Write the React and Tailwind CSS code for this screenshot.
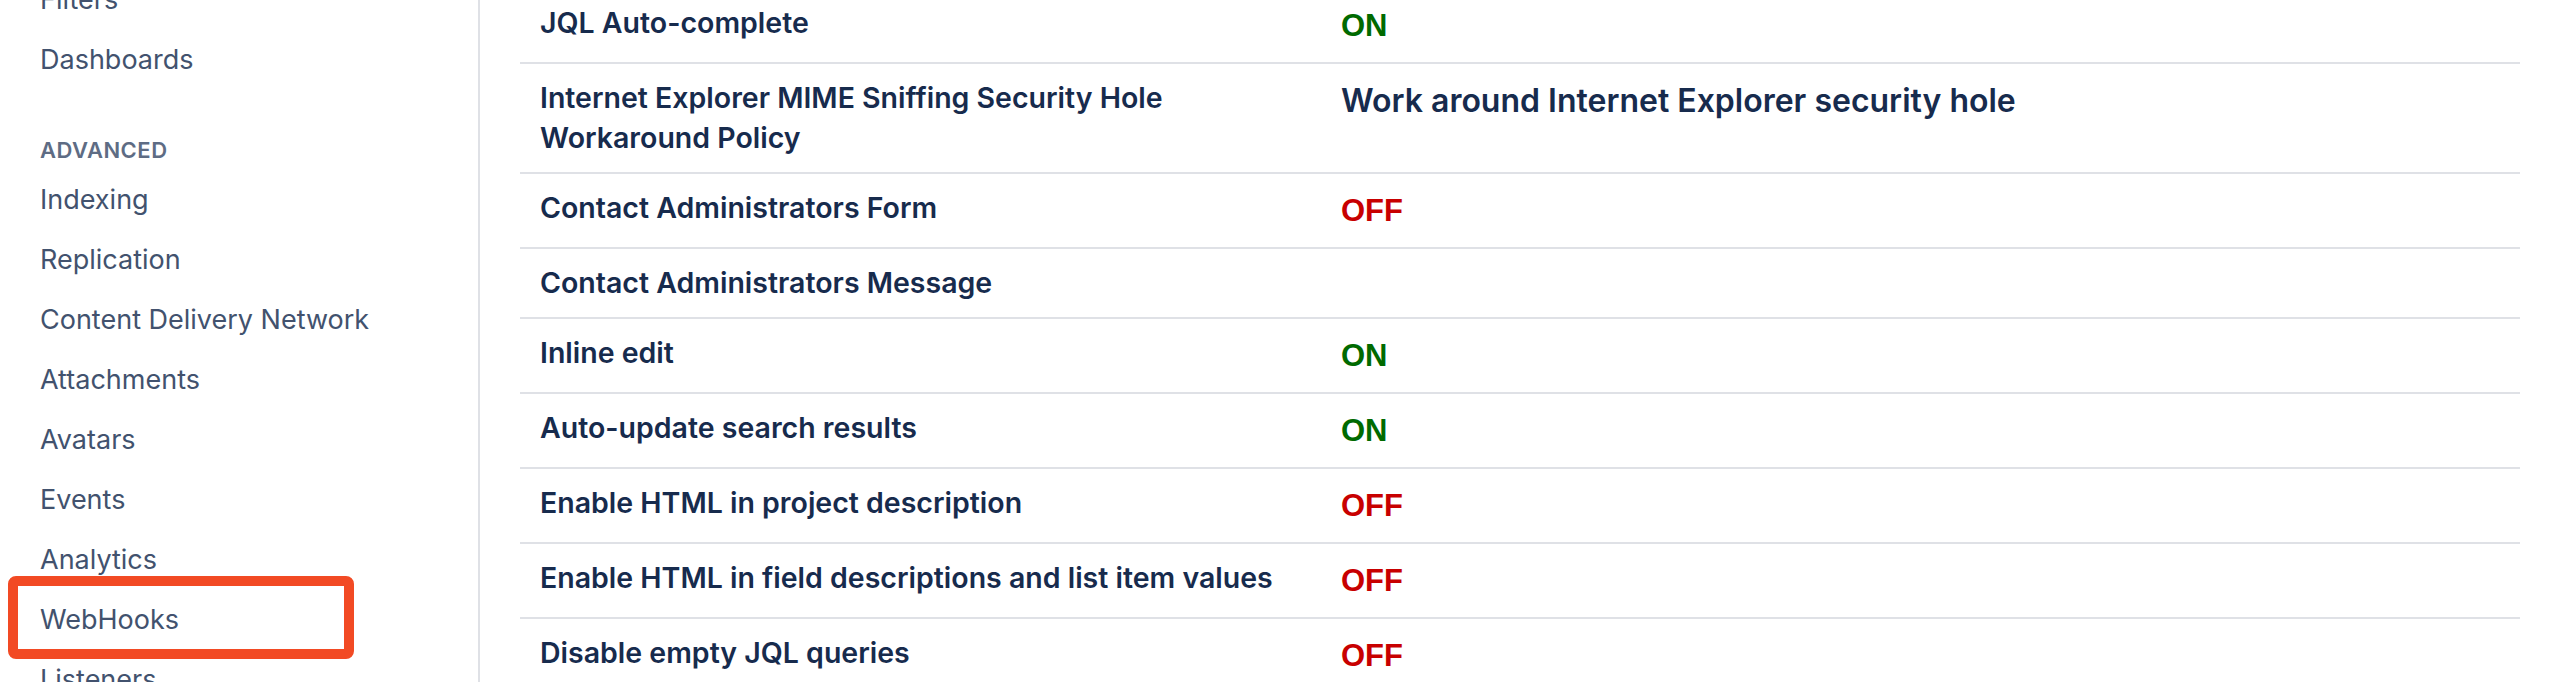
const advanced = [
  "Indexing",
  "Replication",
  "Content Delivery Network",
  "Attachments",
  "Avatars",
  "Events",
  "Analytics",
  "WebHooks",
  "Listeners",
];

const settings = [
  { label: "JQL Auto-complete", value: "ON" },
  {
    label: "Internet Explorer MIME Sniffing Security Hole Workaround Policy",
    value: "Work around Internet Explorer security hole",
  },
  { label: "Contact Administrators Form", value: "OFF" },
  { label: "Contact Administrators Message", value: "" },
  { label: "Inline edit", value: "ON" },
  { label: "Auto-update search results", value: "ON" },
  { label: "Enable HTML in project description", value: "OFF" },
  { label: "Enable HTML in field descriptions and list item values", value: "OFF" },
  { label: "Disable empty JQL queries", value: "OFF" },
];

const SideLink = ({ children, highlight }) => (
  <div className="relative h-[60px] flex items-center pl-[40px] text-[27px] text-[#42526e]">
    {children}
    {highlight && (
      <div className="absolute left-[8px] top-[-14px] w-[346px] h-[83px] border-[10px] border-[#f24a24] rounded-[8px]" />
    )}
  </div>
);

const Value = ({ value }) => {
  if (value === "ON")
    return <div className="h-[45px] leading-[45px] font-['Liberation_Sans',sans-serif] font-bold text-[31px] text-[#006a00]">ON</div>;
  if (value === "OFF")
    return <div className="h-[45px] leading-[45px] font-['Liberation_Sans',sans-serif] font-bold text-[31px] text-[#c80000]">OFF</div>;
  if (!value) return null;
  return <div className="h-[45px] leading-[45px] font-semibold text-[32px] text-[#172b4d]">{value}</div>;
};

export default function App() {
  return (
    <div className="flex h-[682px] overflow-hidden bg-white font-['Inter',sans-serif]">
      <aside className="w-[480px] shrink-0 border-r-2 border-[#dfe1e6]">
        <nav className="-mt-[30px]">
          <SideLink>Filters</SideLink>
          <SideLink>Dashboards</SideLink>
          <div className="pl-[40px] pt-[48px] pb-[8px] leading-[24px] text-[22px] font-semibold tracking-[0.5px] text-[#5e6c84]">
            ADVANCED
          </div>
          {advanced.map((item) => (
            <SideLink key={item} highlight={item === "WebHooks"}>
              {item}
            </SideLink>
          ))}
        </nav>
      </aside>

      <main className="flex-1 px-[40px]">
        <table className="w-full -mt-[11px] border-collapse">
          <tbody>
            {settings.map((row) => (
              <tr key={row.label} className="border-b-2 border-[#dfe1e6] align-top">
                <td className="w-[801px] px-[20px] py-[14px] text-[28.5px] leading-[40px] font-semibold text-[#172b4d]">
                  {row.label}
                </td>
                <td className="px-[20px] py-[14px]">
                  <Value value={row.value} />
                </td>
              </tr>
            ))}
          </tbody>
        </table>
      </main>
    </div>
  );
}
